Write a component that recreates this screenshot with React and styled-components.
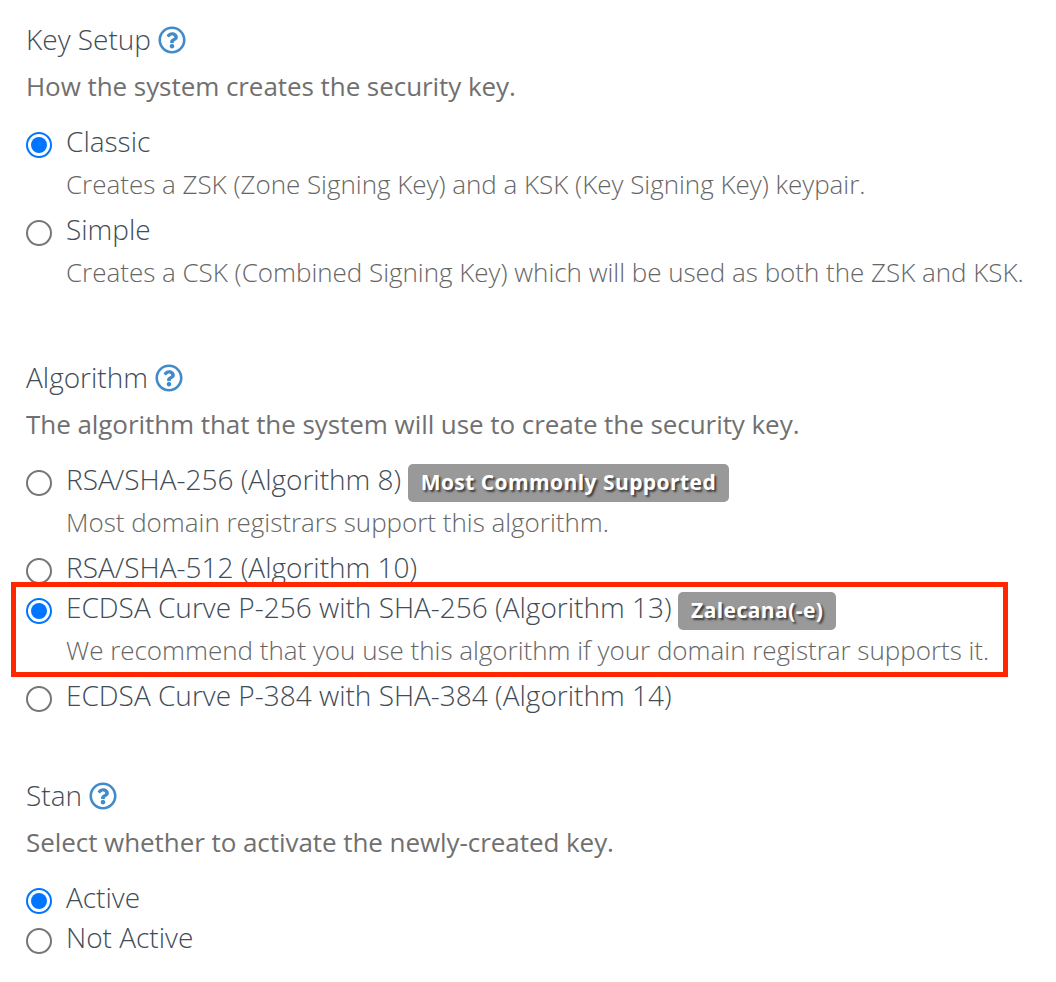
import React from "react";
import styled, { createGlobalStyle } from "styled-components";
import { FaRegQuestionCircle } from "react-icons/fa";

const Global = createGlobalStyle`
  body { margin: 0; background: #fff; font-family: "Open Sans", sans-serif; }
`;
const Page = styled.main`
  position: relative;
  width: 1056px;
  height: 982px;
  box-sizing: border-box;
  padding: 20px 0 0 26px;
  overflow: hidden;
  white-space: nowrap;
`;
const Section = styled.section`
  margin-bottom: ${(p) => p.$gap}px;
`;
const Heading = styled.h2`
  display: flex;
  align-items: flex-start;
  gap: 7px;
  height: 40px;
  margin: 0;
  font-size: 28px;
  font-weight: 300;
  line-height: 38px;
  color: #414c57;
`;
const HelpIcon = styled(FaRegQuestionCircle)`
  width: 28px;
  height: 28px;
  margin-top: 6px;
  color: #428bca;
`;
const Intro = styled.p`
  margin: 6px 0 16px;
  font-size: 26px;
  line-height: 40px;
  font-weight: 400;
  letter-spacing: -0.06px;
  color: #707070;
`;
const Option = styled.label`
  display: grid;
  grid-template-columns: 26px 1fr;
  column-gap: 14px;
`;
const Title = styled.span`
  display: flex;
  align-items: flex-start;
  gap: 6.5px;
  height: 40px;
  font-size: 28px;
  line-height: 38px;
  font-weight: 300;
  color: #414c57;
`;
const Note = styled.span`
  grid-column: 2;
  height: 48px;
  line-height: 45px;
  font-size: 26px;
  font-weight: 300;
  letter-spacing: -0.02px;
  color: #666;
`;
const Badge = styled.span`
  height: 38px;
  padding: 0 13px;
  margin-top: 4px;
  border-radius: 5px;
  background: #999;
  color: #fff;
  font-size: 21px;
  font-weight: 700;
  line-height: 37px;
  letter-spacing: 0.44px;
  text-shadow: 2px 2px 2px rgba(0, 0, 0, 0.6);
`;
const Radio = styled.svg`
  width: 26px;
  height: 26px;
  margin-top: 10px;
`;
const Highlight = styled.div`
  position: absolute;
  left: 11px;
  top: 582px;
  width: 997px;
  height: 95px;
  box-sizing: border-box;
  border: 5px solid #ff2600;
`;

const sections = [
  { title: "Key Setup", intro: "How the system creates the security key.", gap: 60, options: [
    { text: "Classic", on: true, note: "Creates a ZSK (Zone Signing Key) and a KSK (Key Signing Key) keypair." },
    { text: "Simple", note: "Creates a CSK (Combined Signing Key) which will be used as both the ZSK and KSK." },
  ] },
  { title: "Algorithm", intro: "The algorithm that the system will use to create the security key.", gap: 60, options: [
    { text: "RSA/SHA-256 (Algorithm 8)", badge: "Most Commonly Supported", note: "Most domain registrars support this algorithm." },
    { text: "RSA/SHA-512 (Algorithm 10)" },
    { text: "ECDSA Curve P-256 with SHA-256 (Algorithm 13)", on: true, badge: "Zalecana(-e)", note: "We recommend that you use this algorithm if your domain registrar supports it." },
    { text: "ECDSA Curve P-384 with SHA-384 (Algorithm 14)" },
  ] },
  { title: "Stan", intro: "Select whether to activate the newly-created key.", gap: 0, options: [
    { text: "Active", on: true }, { text: "Not Active" },
  ] },
];

export default function App() {
  return (
    <>
      <Global />
      <Page>
        {sections.map((s) => (
          <Section key={s.title} $gap={s.gap}>
            <Heading>{s.title}<HelpIcon /></Heading>
            <Intro>{s.intro}</Intro>
            {s.options.map((o) => (
              <Option key={o.text}>
                <Radio viewBox="0 0 26 26">
                  <circle cx="13" cy="13" r="12" fill="#fff" stroke={o.on ? "#0075ff" : "#767676"} strokeWidth="2" />
                  {o.on && <circle cx="13" cy="13" r="8" fill="#0075ff" />}
                </Radio>
                <Title>{o.text}{o.badge && <Badge>{o.badge}</Badge>}</Title>
                {o.note && <Note>{o.note}</Note>}
              </Option>
            ))}
          </Section>
        ))}
        <Highlight />
      </Page>
    </>
  );
}
